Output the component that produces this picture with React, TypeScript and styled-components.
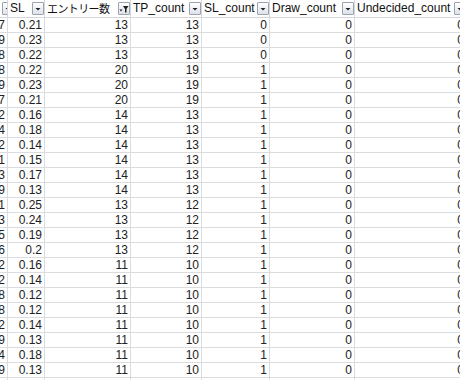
import React from 'react';
import styled, { createGlobalStyle } from 'styled-components';

const GlobalStyle = createGlobalStyle`
  html, body {
    margin: 0;
    padding: 0;
    background: #ffffff;
  }
  body {
    font-family: 'Liberation Sans', Arial, 'Noto Sans CJK JP', sans-serif;
    overflow: hidden;
  }
`;

type Row = [string, string, number, number, number, number, number];

const rows: Row[] = [
  ['7', '0.21', 13, 13, 0, 0, 0],
  ['9', '0.23', 13, 13, 0, 0, 0],
  ['8', '0.22', 13, 13, 0, 0, 0],
  ['8', '0.22', 20, 19, 1, 0, 0],
  ['9', '0.23', 20, 19, 1, 0, 0],
  ['7', '0.21', 20, 19, 1, 0, 0],
  ['2', '0.16', 14, 13, 1, 0, 0],
  ['4', '0.18', 14, 13, 1, 0, 0],
  ['2', '0.14', 14, 13, 1, 0, 0],
  ['1', '0.15', 14, 13, 1, 0, 0],
  ['3', '0.17', 14, 13, 1, 0, 0],
  ['9', '0.13', 14, 13, 1, 0, 0],
  ['1', '0.25', 13, 12, 1, 0, 0],
  ['3', '0.24', 13, 12, 1, 0, 0],
  ['5', '0.19', 13, 12, 1, 0, 0],
  ['6', '0.2', 13, 12, 1, 0, 0],
  ['2', '0.16', 11, 10, 1, 0, 0],
  ['2', '0.14', 11, 10, 1, 0, 0],
  ['8', '0.12', 11, 10, 1, 0, 0],
  ['8', '0.12', 11, 10, 1, 0, 0],
  ['2', '0.14', 11, 10, 1, 0, 0],
  ['9', '0.13', 11, 10, 1, 0, 0],
  ['4', '0.18', 11, 10, 1, 0, 0],
  ['9', '0.13', 11, 10, 1, 0, 0],
];

const headers = [
  { label: '', filtered: false },
  { label: 'SL', filtered: false },
  { label: 'エントリー数', filtered: true },
  { label: 'TP_count', filtered: false },
  { label: 'SL_count', filtered: false },
  { label: 'Draw_count', filtered: false },
  { label: 'Undecided_count', filtered: false },
];

function App() {
  return (
    <>
      <GlobalStyle />
      <Sheet>
        <HeaderRow>
          {headers.map((h, i) => (
            <HeadCell key={i}>
              <HeadLabel $cjk={h.filtered}>{h.label}</HeadLabel>
              <DropButton>
                {h.filtered ? (
                  <svg width="10" height="10" viewBox="0 0 10 10">
                    <path d="M0.5 5.5 L3.5 5.5 L2 7.5 Z" fill="#222" />
                    <path d="M4 2 L9.5 2 L7.5 5 L7.5 8.5 L6 8.5 L6 5 Z" fill="#222" />
                  </svg>
                ) : (
                  <svg width="10" height="10" viewBox="0 0 10 10">
                    <path d="M2.5 4 L7.5 4 L5 6.5 Z" fill="#222" />
                  </svg>
                )}
              </DropButton>
            </HeadCell>
          ))}
        </HeaderRow>
        {rows.map((r, i) => (
          <DataRow key={i}>
            {r.map((v, j) => (
              <Cell key={j}>{v}</Cell>
            ))}
          </DataRow>
        ))}
        <DataRow>
          {headers.map((_, j) => (
            <Cell key={j} />
          ))}
        </DataRow>
      </Sheet>
    </>
  );
}

export default App;

const Sheet = styled.div`
  width: 460px;
  height: 380px;
  overflow: hidden;
  background: #fff;
`;

const columns = '8px 37px 86px 71px 68px 85px 112px';

const HeaderRow = styled.div`
  display: grid;
  grid-template-columns: ${columns};
  height: 18px;
  width: 467px;
`;

const DataRow = styled.div`
  display: grid;
  grid-template-columns: ${columns};
  height: 15px;
  width: 467px;
`;

const HeadCell = styled.div`
  display: flex;
  align-items: center;
  justify-content: space-between;
  overflow: hidden;
  border-right: 1px solid #d4d7dc;
  border-bottom: 1px solid #d4d7dc;
  padding-left: 2px;
  min-width: 0;
`;

const HeadLabel = styled.span<{ $cjk: boolean }>`
  font-size: ${(p) => (p.$cjk ? '11px' : '12px')};
  letter-spacing: ${(p) => (p.$cjk ? '-0.6px' : '0')};
  font-family: ${(p) =>
    p.$cjk
      ? "'Noto Sans CJK JP', sans-serif"
      : "'Liberation Sans', Arial, sans-serif"};
  color: #111;
  white-space: nowrap;
  line-height: 17px;
`;

const DropButton = styled.div`
  flex: none;
  width: 10px;
  height: 11px;
  border: 1px solid #9aa3b0;
  border-radius: 1px;
  background: linear-gradient(#ffffff, #dde2ea);
  display: flex;
  align-items: center;
  justify-content: center;
`;

const Cell = styled.div`
  display: flex;
  align-items: center;
  justify-content: flex-end;
  overflow: hidden;
  border-right: 1px solid #dadcdf;
  border-bottom: 1px solid #dadcdf;
  padding-right: 2px;
  font-size: 12px;
  color: #222;
  white-space: nowrap;
  min-width: 0;
`;
